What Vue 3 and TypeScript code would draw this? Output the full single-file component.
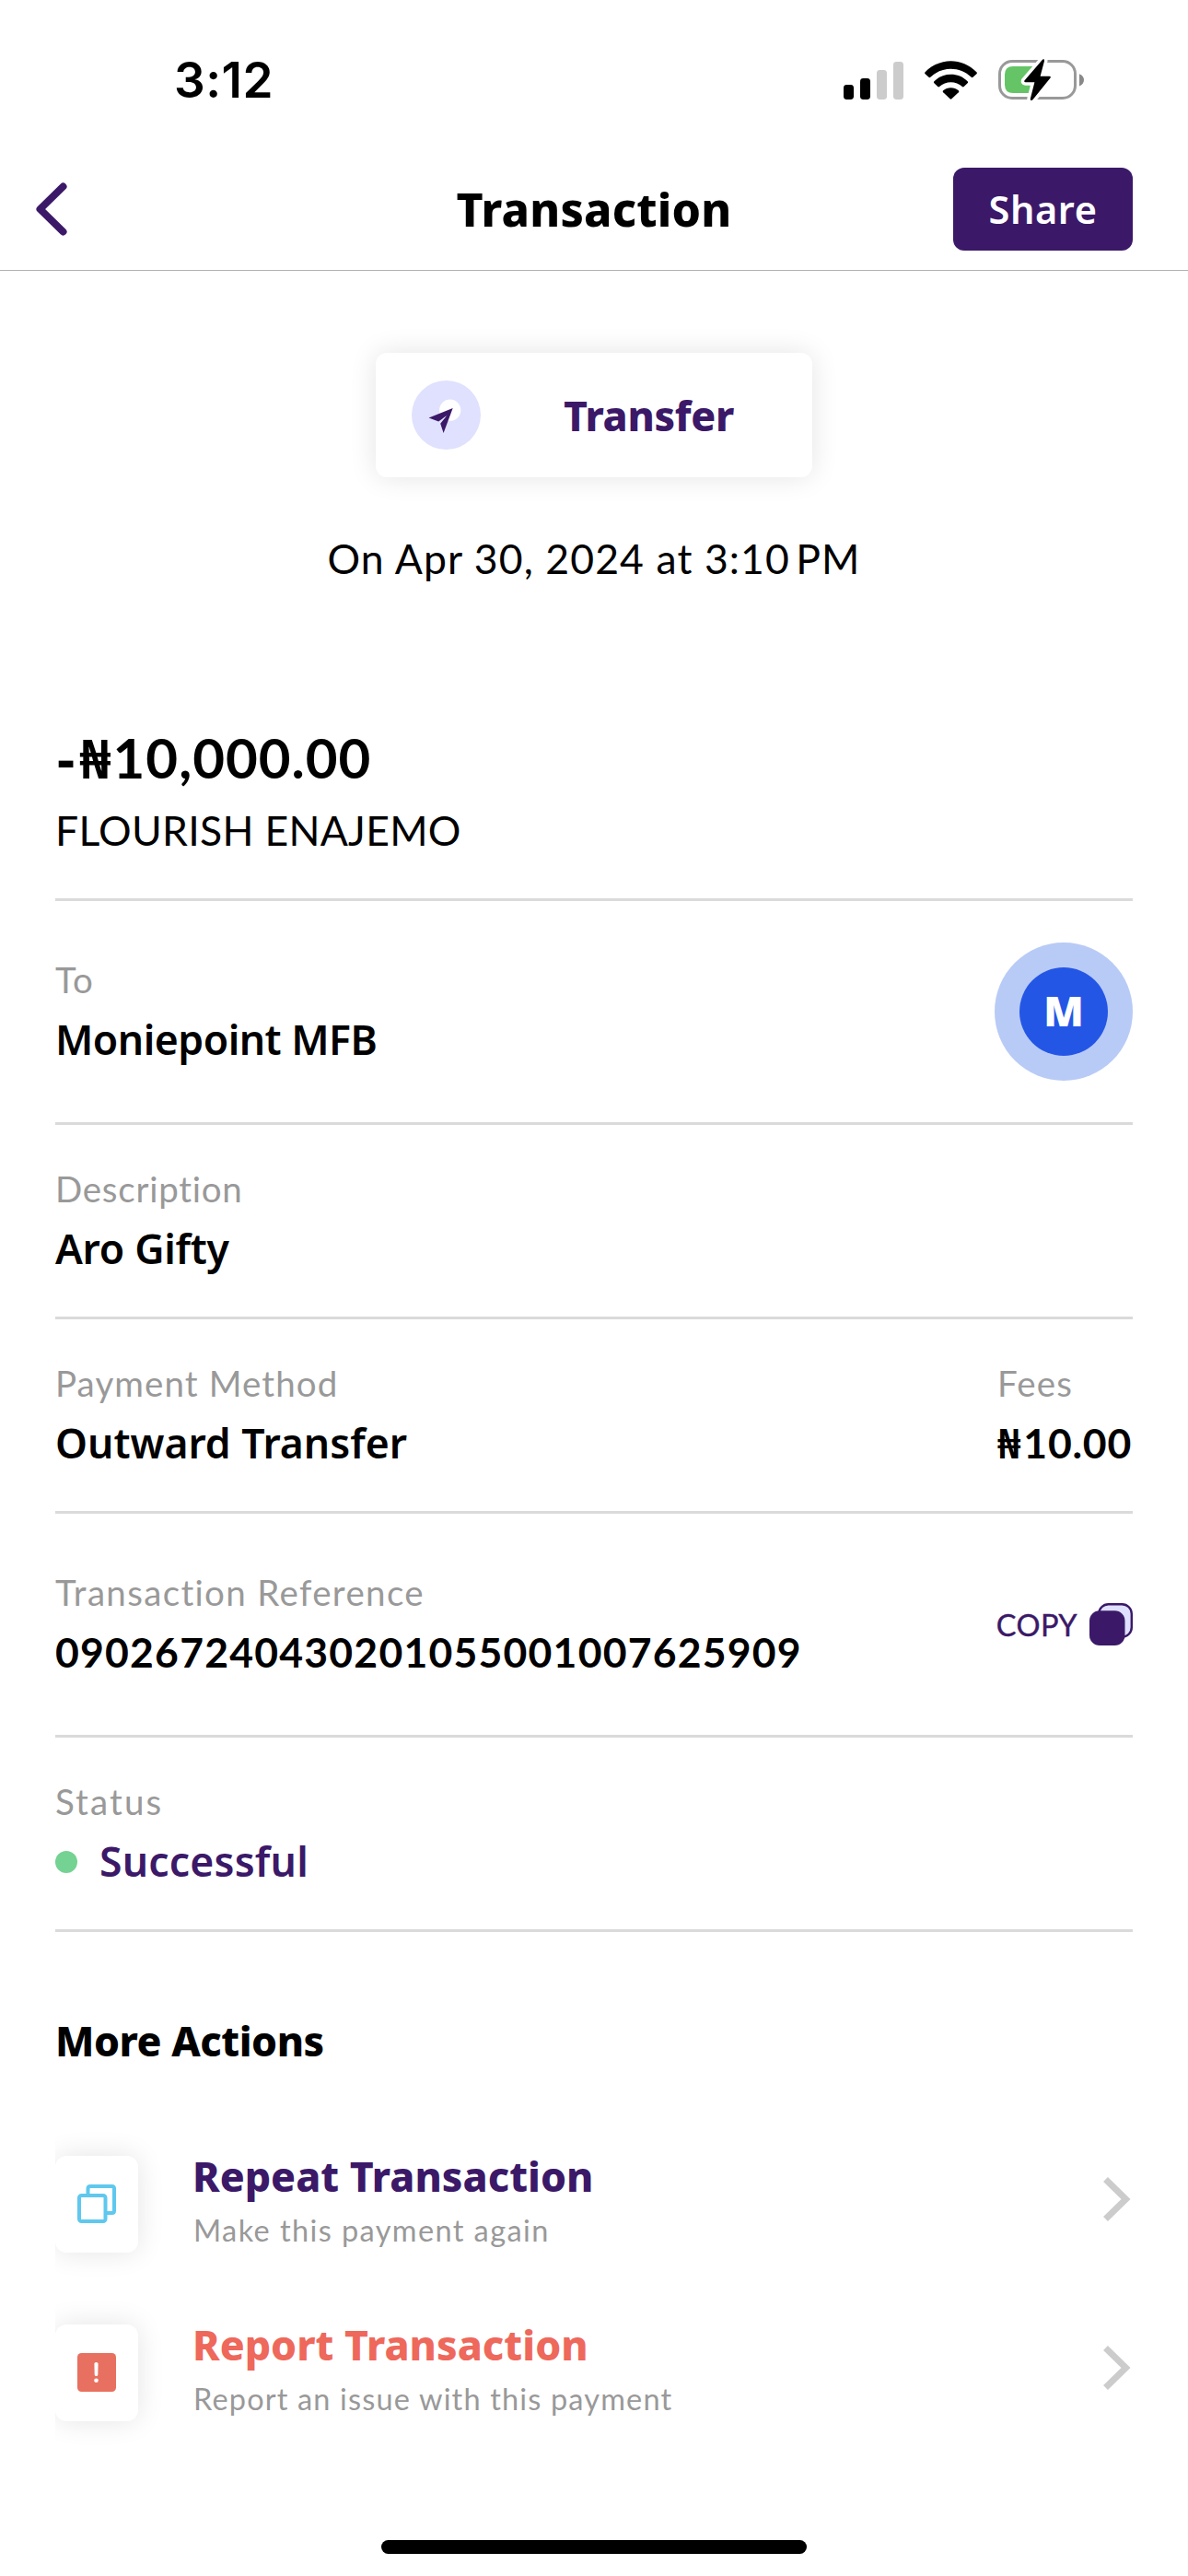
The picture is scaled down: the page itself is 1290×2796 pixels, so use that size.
<script setup lang="ts">
interface Action {
  id: 'repeat' | 'report'
  title: string
  note: string
}

const signalBars = [
  { x: 0, height: 16, on: true },
  { x: 18, height: 23, on: true },
  { x: 36, height: 32, on: false },
  { x: 54, height: 41, on: false }
]

const actions: Action[] = [
  { id: 'repeat', title: 'Repeat Transaction', note: 'Make this payment again' },
  { id: 'report', title: 'Report Transaction', note: 'Report an issue with this payment' }
]
</script>

<template>
  <div class="screen">
    <div class="status-bar">
      <span class="clock">3:12</span>
      <div class="indicators">
        <svg class="signal" width="65" height="41" viewBox="0 0 65 41">
          <rect
            v-for="bar in signalBars"
            :key="bar.x"
            :x="bar.x"
            :y="41 - bar.height"
            width="11"
            :height="bar.height"
            rx="3.4"
            :fill="bar.on ? '#000' : '#ccc'"
          />
        </svg>
        <svg class="wifi" width="57" height="42" viewBox="0 0 57 42">
          <path d="M0.6 12.2C16.3-3.8 40.7-3.8 56.4 12.2Q57.4 13.2 56.4 14.2L52.5 17.8Q51.6 18.6 50.7 17.8C38.2 5.8 18.8 5.8 6.3 17.8Q5.4 18.6 4.5 17.8L0.6 14.2Q-0.4 13.2 0.6 12.2Z" />
          <path d="M10.4 22.2C20.3 12.4 36.7 12.4 46.6 22.2Q47.6 23.2 46.6 24.2L42.7 28Q41.8 28.8 40.9 28C34 21.7 23 21.7 16.1 28Q15.2 28.8 14.3 28L10.4 24.2Q9.4 23.2 10.4 22.2Z" />
          <path d="M20.2 32.2C24.6 28.1 32.4 28.1 36.8 32.2Q37.8 33.2 36.8 34.2L29.4 41.3Q28.5 42.1 27.6 41.3L20.2 34.2Q19.2 33.2 20.2 32.2Z" />
        </svg>
        <svg class="battery" width="94" height="46" viewBox="0 0 94 46">
          <rect x="1.5" y="2.5" width="82" height="40" rx="13.5" fill="none" stroke="#999" stroke-width="3" />
          <path d="M88 16.2C91.3 17.4 93 20 93 22.8S91.3 28.2 88 29.6Z" fill="#888" />
          <path d="M16 8H40V37H16Q7 37 7 28V17Q7 8 16 8Z" fill="#65c466" />
          <path
            d="M48.2 0.6L28.6 23.2Q27.4 25.1 29.6 25.2H39.4L34.8 43.2Q34.7 46 37.2 44.6L56.6 20.6Q57.4 18.9 55.5 18.8H45.6L50 2.2Q50.2-0.4 48.2 0.6Z"
            fill="#000"
            stroke="#fff"
            stroke-width="7"
            stroke-linejoin="round"
            paint-order="stroke"
          />
        </svg>
      </div>
    </div>

    <header class="nav">
      <svg class="back" width="34" height="58" viewBox="0 0 34 58">
        <path d="M29.5 4.5L4.5 29L29.5 53.5" fill="none" stroke="#3b1968" stroke-width="8" stroke-linecap="round" stroke-linejoin="round" />
      </svg>
      <h1 class="nav-title">Transaction</h1>
      <button class="share">Share</button>
    </header>

    <main class="content">
      <div class="type-card">
        <svg class="plane" width="75" height="75" viewBox="0 0 75 75">
          <circle cx="37.5" cy="37.5" r="37.5" fill="#dfe1fe" />
          <circle cx="41.7" cy="32.2" r="11.6" fill="#fff" />
          <path d="M44.7 30L18.6 40.4L29.2 44.6L38.2 38L31.2 46.8L34.6 57Z" fill="#3b1968" />
        </svg>
        <span class="type-name">Transfer</span>
      </div>
      <p class="date">On Apr 30, 2024 at 3:10<span class="thin">&#8239;</span>PM</p>

      <section class="summary">
        <div class="amount"><span class="sign">-</span><span class="naira">₦</span>10,000.00</div>
        <div class="sender">FLOURISH ENAJEMO</div>
      </section>

      <section class="row tall">
        <div>
          <div class="label to">To</div>
          <div class="value words bank">Moniepoint MFB</div>
        </div>
        <div class="bank-logo"><div class="bank-core">M</div></div>
      </section>

      <section class="row">
        <div>
          <div class="label description">Description</div>
          <div class="value words note">Aro Gifty</div>
        </div>
      </section>

      <section class="row">
        <div>
          <div class="label method">Payment Method</div>
          <div class="value words">Outward Transfer</div>
        </div>
        <div class="fees">
          <div class="label fee-label">Fees</div>
          <div class="value"><span class="naira">₦</span>10.00</div>
        </div>
      </section>

      <section class="row tall">
        <div>
          <div class="label reference">Transaction Reference</div>
          <div class="value digits">090267240430201055001007625909</div>
        </div>
        <div class="copy">
          <span class="copy-text">COPY</span>
          <svg width="47" height="46" viewBox="0 0 47 46">
            <rect x="10.2" y="1.2" width="35.6" height="35.6" rx="10.5" fill="#dfe1fe" stroke="#3b1968" stroke-width="2.4" />
            <rect x="0" y="8.3" width="38.5" height="37.7" rx="11" fill="#3b1968" />
          </svg>
        </div>
      </section>

      <section class="row">
        <div>
          <div class="label status">Status</div>
          <div class="value words success"><i class="dot"></i>Successful</div>
        </div>
      </section>

      <h2 class="more">More Actions</h2>
      <div class="actions">
        <div v-for="action in actions" :key="action.id" class="action" :class="action.id">
          <div class="tile-clip">
            <div class="tile">
              <svg v-if="action.id === 'repeat'" width="42" height="42" viewBox="0 0 42 42" fill="none" stroke="#5fc8ee" stroke-width="4">
                <path d="M11.5 10V4.5Q11.5 2 14 2H37.5Q40 2 40 4.5V28.5Q40 31 37.5 31H32" />
                <rect x="2" y="12" width="28.5" height="28" rx="2.5" />
              </svg>
              <svg v-else width="42" height="42" viewBox="0 0 42 42">
                <rect width="42" height="42" rx="4.5" fill="#e87060" />
                <path d="M18.4 11.5Q18.4 10 20.5 10T22.6 11.5L22.3 23.5Q22.3 25 20.5 25T18.7 23.5Z" fill="#fff" />
                <circle cx="20.5" cy="29.7" r="2.3" fill="#fff" />
              </svg>
            </div>
          </div>
          <div class="action-text">
            <div class="action-title">{{ action.title }}</div>
            <div class="action-note">{{ action.note }}</div>
          </div>
          <svg class="chevron" width="30" height="48" viewBox="0 0 30 48">
            <path d="M2.5 2.5L24.5 24L2.5 45.5" fill="none" stroke="#ccc" stroke-width="7" />
          </svg>
        </div>
      </div>
    </main>

    <div class="home-indicator"></div>
  </div>
</template>

<style>
body {
  margin: 0;
  background: #fff;
}
</style>

<style scoped>
.screen {
  box-sizing: border-box;
  display: flex;
  flex-direction: column;
  width: 1290px;
  height: 2796px;
  overflow: hidden;
  background: #fff;
  color: #000;
  font-family: Lato, 'Noto Sans', sans-serif;
}

.status-bar {
  box-sizing: border-box;
  display: flex;
  align-items: center;
  justify-content: space-between;
  flex: none;
  height: 160px;
  padding: 14px 112px 0 189px;
}

.clock {
  font: 600 53px/60px Inter, sans-serif;
  letter-spacing: 0.5px;
}

.indicators {
  display: flex;
  align-items: center;
}

.wifi {
  margin-left: 23px;
  margin-top: -1px;
}

.battery {
  margin-left: 23px;
}

.nav {
  box-sizing: border-box;
  display: grid;
  grid-template-columns: 1fr auto 1fr;
  align-items: center;
  flex: none;
  height: 134px;
  padding: 0 60px 0 40px;
  border-bottom: 1px solid #b2b2b2;
}

.back {
  margin-left: -1px;
}

.nav-title {
  margin: 0 0 0 20px;
  font: 800 50px/60px 'Noto Sans', sans-serif;
  letter-spacing: 0.2px;
}

.share {
  justify-self: end;
  width: 195px;
  height: 90px;
  padding: 0;
  border: 0;
  border-radius: 12px;
  background: #3b1968;
  color: #fff;
  font: 600 41.5px/90px 'Noto Sans', sans-serif;
  letter-spacing: 0.6px;
}

.content {
  flex: none;
  padding: 89px 60px 0;
}

.type-card {
  box-sizing: border-box;
  display: flex;
  align-items: center;
  width: 474px;
  height: 135px;
  margin: 0 auto;
  padding-left: 39px;
  border-radius: 12px;
  background: #fff;
  box-shadow: 0 0 30px rgba(0, 0, 0, 0.11);
}

.type-name {
  margin-left: 90px;
  color: #3b1968;
  font: 800 44.5px/60px 'Noto Sans', sans-serif;
  letter-spacing: -0.3px;
}

.date {
  margin: 58px 0 0;
  font-size: 44.5px;
  line-height: 60px;
  letter-spacing: 1.1px;
  text-align: center;
}

.thin {
  margin-right: -6px;
}

.summary {
  margin-top: 148px;
  padding-bottom: 44px;
  border-bottom: 3px solid #dadada;
}

.amount {
  height: 76px;
  font-size: 60px;
  font-weight: 700;
  line-height: 76px;
  letter-spacing: 1px;
}

.sign {
  margin-left: 2px;
  font-family: 'Noto Sans', sans-serif;
}

.naira {
  margin-right: 2px;
  font-family: 'Noto Sans', sans-serif;
}

.amount .naira {
  margin-left: 4px;
  margin-right: 1px;
}

.sender {
  height: 60px;
  margin-top: 11px;
  font-size: 44.5px;
  line-height: 60px;
  letter-spacing: 0.3px;
}

.row {
  display: flex;
  align-items: center;
  justify-content: space-between;
  height: 208px;
  border-bottom: 3px solid #dadada;
}

.row.tall {
  height: 240px;
}

.label {
  height: 50px;
  color: #999;
  font-size: 38.5px;
  line-height: 50px;
}

.value {
  height: 60px;
  margin-top: 10px;
  font-size: 44.5px;
  font-weight: 700;
  line-height: 60px;
}

.words {
  font-family: 'Noto Sans', sans-serif;
  font-weight: 600;
}

.to {
  letter-spacing: 1px;
}

.bank {
  letter-spacing: -0.5px;
}

.description {
  letter-spacing: 0.75px;
}

.note {
  letter-spacing: -0.3px;
}

.method {
  letter-spacing: 1.1px;
}

.fees {
  width: 147px;
  white-space: nowrap;
}

.fees .value {
  letter-spacing: 0.8px;
}

.fee-label {
  letter-spacing: 1.2px;
}

.reference {
  letter-spacing: 1.34px;
}

.digits {
  letter-spacing: 1.22px;
}

.status {
  letter-spacing: 2.1px;
}

.success {
  display: flex;
  align-items: center;
  color: #3b1968;
  letter-spacing: 0.2px;
}

.dot {
  width: 24px;
  height: 24px;
  margin: 2px 24px 0 0;
  border-radius: 50%;
  background: #74d292;
}

.bank-logo {
  display: flex;
  align-items: center;
  justify-content: center;
  width: 150px;
  height: 150px;
  border-radius: 50%;
  background: #b8cbf6;
}

.bank-core {
  width: 96px;
  height: 96px;
  border-radius: 50%;
  background: #2456e6;
  color: #fff;
  font: 900 45px/94px 'Noto Sans', sans-serif;
  text-align: center;
}

.copy {
  display: flex;
  align-items: center;
  gap: 13px;
  color: #3b1968;
  font-size: 32.5px;
  line-height: 46px;
}

.copy-text {
  margin-top: 1px;
  letter-spacing: 0.4px;
  -webkit-text-stroke: 0.4px #3b1968;
}

.copy svg {
  display: block;
}

.more {
  margin: 88px 0 0;
  font: 800 44.5px/60px 'Noto Sans', sans-serif;
  letter-spacing: -0.45px;
}

.actions {
  display: flex;
  flex-direction: column;
  gap: 70px;
  margin-top: 87px;
}

.action {
  display: flex;
  height: 113px;
}

.tile-clip {
  width: 90px;
  height: 105px;
  margin-top: 8px;
  clip-path: inset(-50px -50px -50px 0);
}

.tile {
  box-sizing: border-box;
  display: flex;
  align-items: center;
  justify-content: center;
  width: 90px;
  height: 105px;
  padding-bottom: 2px;
  border-radius: 12px;
  background: #fff;
  box-shadow: 0 0 30px rgba(0, 0, 0, 0.11);
}

.action-text {
  flex: 1;
  margin-left: 60px;
}

.action-title {
  height: 60px;
  margin-left: -1px;
  font: 800 44.5px/60px 'Noto Sans', sans-serif;
  letter-spacing: 0.05px;
}

.repeat .action-title {
  color: #3b1968;
}

.report .action-title {
  color: #ee685b;
}

.action-note {
  height: 44px;
  margin-top: 7px;
  color: #999;
  font-size: 32.5px;
  line-height: 44px;
}

.repeat .action-note {
  letter-spacing: 1.4px;
}

.report .action-note {
  letter-spacing: 1.16px;
}

.chevron {
  margin: 31px 2px 0 0;
}

.home-indicator {
  flex: none;
  width: 462px;
  height: 15px;
  margin: auto auto 24px;
  border-radius: 8px;
  background: #000;
}
</style>
